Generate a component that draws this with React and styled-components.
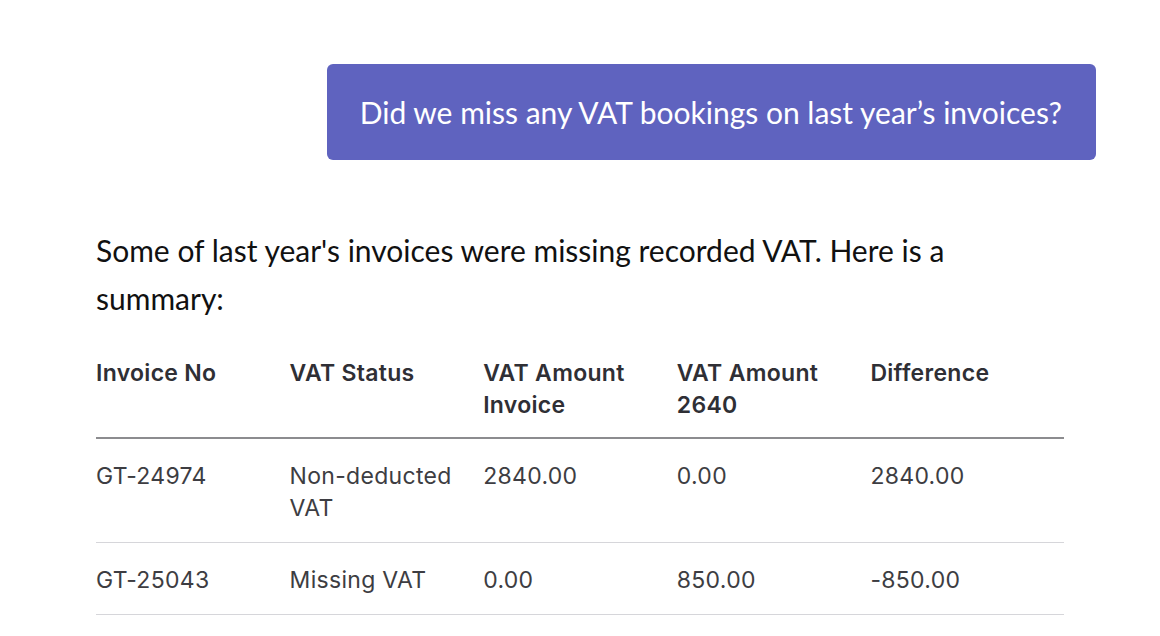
import React from 'react';
import styled, { createGlobalStyle } from 'styled-components';

const GlobalStyle = createGlobalStyle`
    body {
        margin: 0;
        background: #fff;
        font-family: Lato, "Noto Sans", sans-serif;
    }
`;

const Page = styled.div`
    width: 1160px;
    padding: 64px 64px 0 96px;
    box-sizing: border-box;
`;

const UserRow = styled.div`
    display: flex;
    justify-content: flex-end;
`;

const Bubble = styled.div`
    background: #5f63bf;
    color: #fff;
    border-radius: 6px;
    padding: 0 34px 0 33px;
    height: 96px;
    display: flex;
    align-items: center;
    font-size: 30px;
`;

const Answer = styled.div`
    width: 968px;
    margin-top: 66px;
`;

const Text = styled.p`
    margin: 0;
    font-size: 30px;
    line-height: 48px;
    color: #111;
`;

const Table = styled.table`
    width: 100%;
    margin-top: 35px;
    border-collapse: collapse;
    table-layout: fixed;
    font-family: Inter, "Noto Sans", sans-serif;
    font-size: 23px;
    letter-spacing: 0.3px;
    line-height: 32px;
`;

const Th = styled.th`
    text-align: left;
    font-weight: 600;
    color: #2f2f35;
    padding: 0 20px 16px 0;
    vertical-align: top;
    border-bottom: 2px solid #8c8c8f;
`;

const Td = styled.td`
    color: #3d3d42;
    padding: 21px 20px 18px 0;
    vertical-align: top;
    border-bottom: 1px solid #d6d6da;
`;

const columns = ['Invoice No', 'VAT Status', 'VAT Amount Invoice', 'VAT Amount 2640', 'Difference'];

const rows = [
    ['GT-24974', 'Non-deducted VAT', '2840.00', '0.00', '2840.00'],
    ['GT-25043', 'Missing VAT', '0.00', '850.00', '-850.00'],
];

export default function App() {
    return (
        <Page>
            <GlobalStyle />
            <UserRow>
                <Bubble>Did we miss any VAT bookings on last year’s invoices?</Bubble>
            </UserRow>
            <Answer>
                <Text>
                    Some of last year's invoices were missing recorded VAT. Here is a summary:
                </Text>
                <Table>
                    <thead>
                        <tr>
                            {columns.map(c => <Th key={c}>{c}</Th>)}
                        </tr>
                    </thead>
                    <tbody>
                        {rows.map(r => (
                            <tr key={r[0]}>
                                {r.map((v, i) => <Td key={i}>{v}</Td>)}
                            </tr>
                        ))}
                    </tbody>
                </Table>
            </Answer>
        </Page>
    );
}
